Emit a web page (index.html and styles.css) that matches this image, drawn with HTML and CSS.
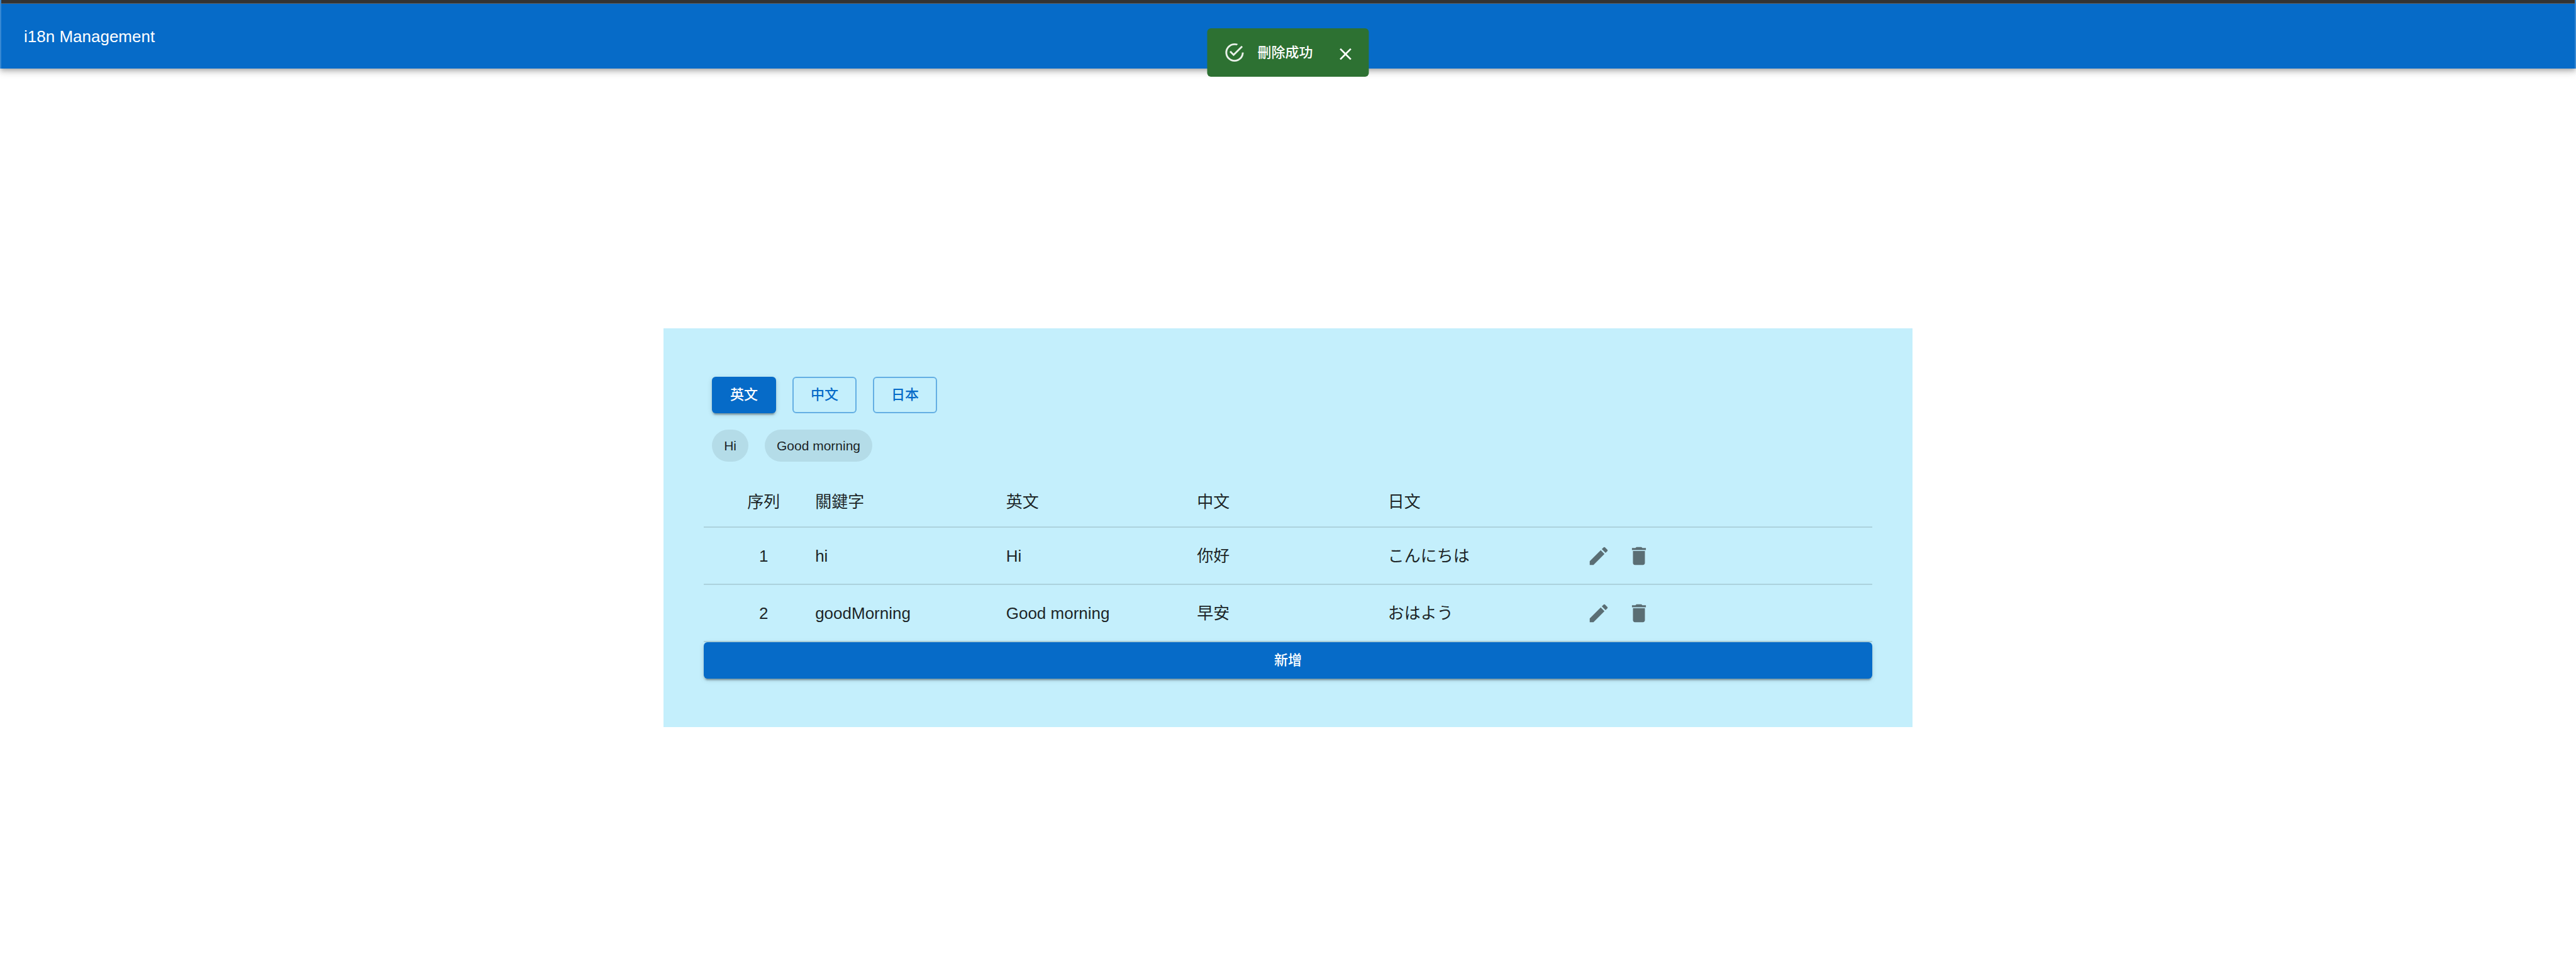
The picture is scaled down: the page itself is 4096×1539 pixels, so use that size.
FILE: index.html
```html
<!DOCTYPE html>
<html lang="zh-Hant">
<head>
<meta charset="utf-8">
<title>i18n Management</title>
<link rel="stylesheet" href="styles.css">
</head>
<body>
<svg class="sprite" aria-hidden="true">
  <symbol id="edit" viewBox="0 0 24 24"><path d="M3 17.25V21h3.75L17.81 9.94l-3.75-3.75L3 17.25zM20.71 7.04c.39-.39.39-1.02 0-1.41l-2.34-2.34a.9959.9959 0 0 0-1.41 0l-1.83 1.83 3.75 3.75 1.83-1.83z"/></symbol>
  <symbol id="delete" viewBox="0 0 24 24"><path d="M6 19c0 1.1.9 2 2 2h8c1.1 0 2-.9 2-2V7H6v12zM19 4h-3.5l-1-1h-5l-1 1H5v2h14V4z"/></symbol>
  <symbol id="success" viewBox="0 0 24 24"><path d="M20,12A8,8 0 0,1 12,20A8,8 0 0,1 4,12A8,8 0 0,1 12,4C12.76,4 13.5,4.11 14.2, 4.31L15.77,2.74C14.61,2.26 13.34,2 12,2A10,10 0 0,0 2,12A10,10 0 0,0 12,22A10,10 0 0, 0 22,12M7.91,10.08L6.5,11.5L11,16L21,6L19.59,4.58L11,13.17L7.91,10.08Z"/></symbol>
  <symbol id="close" viewBox="0 0 24 24"><path d="M19 6.41L17.59 5 12 10.59 6.41 5 5 6.41 10.59 12 5 17.59 6.41 19 12 13.41 17.59 19 19 17.59 13.41 12z"/></symbol>
</svg>

<header class="app-bar">
  <h1 class="app-title">i18n Management</h1>
</header>

<div class="alert" role="alert">
  <svg class="alert-icon" aria-hidden="true"><use href="#success"/></svg>
  <span>刪除成功</span>
  <button class="alert-close" type="button" aria-label="Close"><svg class="close-icon"><use href="#close"/></svg></button>
</div>

<main class="main">
  <section class="panel">
    <div class="languages">
      <button class="button contained" type="button">英文</button>
      <button class="button outlined" type="button">中文</button>
      <button class="button outlined" type="button">日本</button>
    </div>
    <div class="chips">
      <span class="chip">Hi</span>
      <span class="chip">Good morning</span>
    </div>
    <table class="entries">
      <colgroup>
        <col class="col-index"><col class="col-text"><col class="col-text"><col class="col-text"><col class="col-text"><col>
      </colgroup>
      <thead>
        <tr><th scope="col">序列</th><th scope="col">關鍵字</th><th scope="col">英文</th><th scope="col">中文</th><th scope="col">日文</th><td></td></tr>
      </thead>
      <tbody>
        <tr>
          <td>1</td><td>hi</td><td>Hi</td><td>你好</td><td lang="ja">こんにちは</td>
          <td>
            <div class="actions">
              <button class="icon-button" type="button" aria-label="Edit"><svg class="icon"><use href="#edit"/></svg></button>
              <button class="icon-button" type="button" aria-label="Delete"><svg class="icon"><use href="#delete"/></svg></button>
            </div>
          </td>
        </tr>
        <tr>
          <td>2</td><td>goodMorning</td><td>Good morning</td><td>早安</td><td lang="ja">おはよう</td>
          <td>
            <div class="actions">
              <button class="icon-button" type="button" aria-label="Edit"><svg class="icon"><use href="#edit"/></svg></button>
              <button class="icon-button" type="button" aria-label="Delete"><svg class="icon"><use href="#delete"/></svg></button>
            </div>
          </td>
        </tr>
      </tbody>
    </table>
    <button class="button contained add" type="button">新增</button>
  </section>
</main>
</body>
</html>
```
FILE: styles.css
```css
:root {
  --primary: #066bc8;
  --text: rgba(0, 0, 0, 0.87);
}

* {
  box-sizing: border-box;
}

body {
  margin: 0;
  min-height: 100vh;
  display: flex;
  flex-direction: column;
  background: #fff;
  color: var(--text);
  font-family: "Liberation Sans", "Noto Sans CJK TC", sans-serif;
  font-size: 26px;
  line-height: 38px;
}

:lang(ja) {
  font-family: "Liberation Sans", "Noto Sans CJK JP", sans-serif;
}

button {
  margin: 0;
  padding: 0;
  border: 0;
  background: none;
  color: inherit;
  font: inherit;
  cursor: pointer;
}

svg {
  display: block;
  fill: currentColor;
}

.sprite {
  position: absolute;
  width: 0;
  height: 0;
}

/* App bar */
.app-bar {
  display: flex;
  align-items: center;
  min-height: 109px;
  padding: 6px 36px 0;
  border: solid #3788d3;
  border-width: 0 2px;
  background: linear-gradient(#333 5px, #5c5c5c 5px, #5c5c5c 6px, var(--primary) 6px);
  color: #fff;
  box-shadow: 0 3px 6px -2px rgba(0, 0, 0, 0.2), 0 6px 8px 0 rgba(0, 0, 0, 0.14), 0 2px 16px 0 rgba(0, 0, 0, 0.12);
}

.app-title {
  margin: 0;
  font-size: 26px;
  font-weight: 400;
}

/* Snackbar alert */
.alert {
  position: fixed;
  top: 45px;
  left: 50%;
  transform: translateX(-50%);
  display: flex;
  align-items: center;
  height: 77px;
  padding: 0 13px 0 26px;
  border-radius: 6px;
  background: #2d7132;
  color: #fff;
  font-size: 22px;
  font-weight: 500;
  white-space: nowrap;
}

.alert-icon {
  width: 35px;
  height: 35px;
  margin-right: 19px;
  opacity: 0.9;
}

.alert-close {
  margin-left: 28px;
  padding: 10px 8px 6px;
}

.close-icon {
  width: 32px;
  height: 32px;
}

/* Centred panel */
.main {
  flex: 1;
  display: flex;
  align-items: center;
  justify-content: center;
  padding-top: 30px;
}

.panel {
  width: 48.48%;
  padding: 77px 64px;
  background: #c4effc;
}

.languages,
.chips {
  display: flex;
  gap: 26px;
  padding: 0 13px;
}

.chips {
  margin: 26px 0 24px;
}

.button {
  height: 58px;
  min-width: 102px;
  border-radius: 6px;
  font-size: 22px;
  font-weight: 500;
}

.contained {
  background: var(--primary);
  color: #fff;
  box-shadow: 0 5px 2px -3px rgba(0, 0, 0, 0.2), 0 3px 3px 0 rgba(0, 0, 0, 0.14), 0 2px 8px 0 rgba(0, 0, 0, 0.12);
}

.outlined {
  border: 2px solid #64afe3;
  color: var(--primary);
}

.chip {
  display: flex;
  align-items: center;
  height: 51px;
  padding: 0 19px;
  border-radius: 26px;
  background: rgba(0, 0, 0, 0.08);
  font-size: 21px;
}

/* Translation table */
.entries {
  width: 100%;
  table-layout: fixed;
  border-collapse: separate;
  border-spacing: 0;
}

.col-index {
  width: 9.53%;
}

.col-text {
  width: 16.34%;
}

.entries th,
.entries td {
  height: 91px;
  padding: 0;
  border-bottom: 2px solid rgba(0, 0, 0, 0.12);
  font-weight: 400;
  text-align: left;
  vertical-align: middle;
}

.entries thead th,
.entries thead td {
  height: 81px;
}

.entries th:first-child,
.entries td:first-child {
  padding: 0 13px 0 26px;
  text-align: center;
}

.actions {
  display: flex;
}

.icon-button {
  padding: 13px;
  color: rgba(0, 0, 0, 0.54);
}

.icon {
  width: 38px;
  height: 38px;
}

.add {
  display: block;
  width: 100%;
}
```
